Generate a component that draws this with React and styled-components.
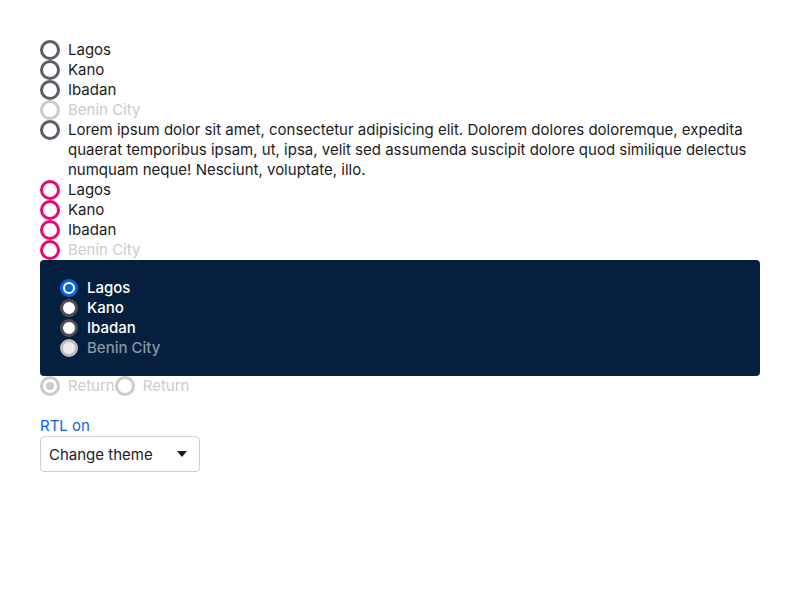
import styled, { createGlobalStyle } from "styled-components";

const GlobalStyle = createGlobalStyle`
  body {
    margin: 0;
    font-family: Inter, "Noto Sans", sans-serif;
    font-size: 15px;
    color: #1b1b1f;
    background: #fff;
  }
`;

const COLORS = {
  gray: "#585d68",
  pink: "#e8086f",
  disabled: "#cbcbcb",
};

const cities = ["Lagos", "Kano", "Ibadan", "Benin City"];
const lorem =
  "Lorem ipsum dolor sit amet, consectetur adipisicing elit. Dolorem dolores doloremque, expedita quaerat temporibus ipsam, ut, ipsa, velit sed assumenda suscipit dolore quod similique delectus numquam neque! Nesciunt, voluptate, illo.";

function Radio({ label, tone = "gray", disabled, checked, dark }) {
  return (
    <Row $disabled={disabled} $dark={dark}>
      <Circle $tone={tone} $disabled={disabled} $checked={checked} $dark={dark} />
      <Label>{label}</Label>
    </Row>
  );
}

export default function App() {
  return (
    <Page>
      <GlobalStyle />
      <Group>
        {cities.map((c) => (
          <Radio key={c} label={c} disabled={c === "Benin City"} />
        ))}
        <Radio label={lorem} />
      </Group>
      <Group>
        {cities.map((c) => (
          <Radio key={c} label={c} tone="pink" disabled={c === "Benin City"} />
        ))}
      </Group>
      <DarkPanel>
        {cities.map((c) => (
          <Radio
            key={c}
            label={c}
            dark
            checked={c === "Lagos"}
            disabled={c === "Benin City"}
          />
        ))}
      </DarkPanel>
      <Inline>
        <Radio label="Return" disabled checked />
        <Radio label="Return" disabled />
      </Inline>
      <RtlLink>RTL on</RtlLink>
      <Select>
        <span>Change theme</span>
        <Caret />
      </Select>
    </Page>
  );
}

const Page = styled.div`
  padding: 40px;
  display: flex;
  flex-direction: column;
  align-items: flex-start;
`;

const Group = styled.div`
  display: flex;
  flex-direction: column;
  align-self: stretch;
`;

const Row = styled.label`
  display: flex;
  align-items: flex-start;
  gap: 8px;
  line-height: 20px;
  color: ${(p) =>
    p.$disabled ? (p.$dark ? "#8a96a6" : COLORS.disabled) : p.$dark ? "#fff" : "#1b1b1f"};
  font-weight: ${(p) => (p.$dark ? 500 : 400)};
`;

// pink keeps its ring colour when disabled, gray fades out
const ringColor = (p) => {
  if (p.$dark) {
    if (p.$checked) return "#0a64e6";
    return p.$disabled ? "#bdbdbd" : "#4f4f52";
  }
  if (p.$disabled && p.$tone === "gray") return COLORS.disabled;
  return COLORS[p.$tone];
};

const Circle = styled.span`
  flex: none;
  box-sizing: border-box;
  width: ${(p) => (p.$dark ? 18 : 20)}px;
  height: ${(p) => (p.$dark ? 18 : 20)}px;
  margin: ${(p) => (p.$dark ? "1px" : "0")};
  border-radius: 50%;
  border: 3px solid ${ringColor};
  background: ${(p) =>
    p.$dark ? (p.$disabled ? "#ececec" : "#fff") : "transparent"};
  display: flex;
  align-items: center;
  justify-content: center;

  &::after {
    content: "";
    display: ${(p) => (p.$checked ? "block" : "none")};
    width: 8px;
    height: 8px;
    border-radius: 50%;
    background: ${(p) => (p.$dark ? "#0a64e6" : COLORS.disabled)};
  }
`;

const Label = styled.span`
  flex: 1;
`;

const DarkPanel = styled.div`
  align-self: stretch;
  background: #05203e;
  border-radius: 4px;
  padding: 18px 19px 18px;
  display: flex;
  flex-direction: column;
`;

const Inline = styled.div`
  display: flex;
`;

const RtlLink = styled.div`
  margin-top: 20px;
  line-height: 20px;
  color: #0a66d8;
`;

const Select = styled.div`
  box-sizing: border-box;
  width: 160px;
  height: 36px;
  border: 1px solid #cfcfd3;
  border-radius: 4px;
  padding: 0 12px 0 8px;
  display: flex;
  align-items: center;
  justify-content: space-between;
  color: #1b1b1f;
`;

const Caret = styled.span`
  width: 0;
  height: 0;
  border-left: 5px solid transparent;
  border-right: 5px solid transparent;
  border-top: 6px solid #1b1b1f;
`;
